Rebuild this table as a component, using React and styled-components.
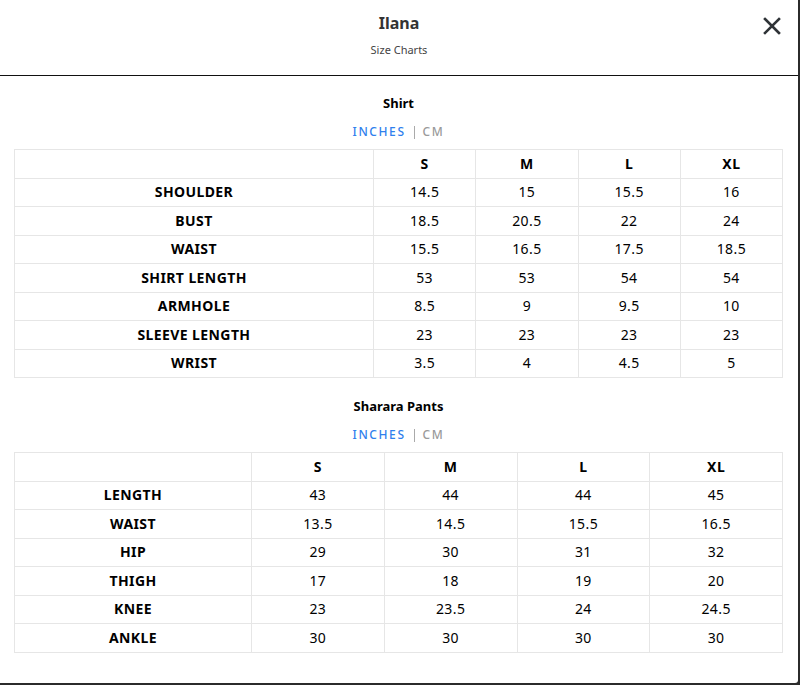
import React from 'react';
import styled, { createGlobalStyle } from 'styled-components';

const GlobalStyle = createGlobalStyle`
    html, body {
        margin: 0;
        padding: 0;
        background: #2b2b2b;
    }
    body {
        font-family: "Noto Sans", "Open Sans", Arial, sans-serif;
        color: #000;
    }
`;

const charts = [
    {
        title: 'Shirt',
        labelWidth: 359,
        sizes: ['S', 'M', 'L', 'XL'],
        rows: [
            ['SHOULDER', '14.5', '15', '15.5', '16'],
            ['BUST', '18.5', '20.5', '22', '24'],
            ['WAIST', '15.5', '16.5', '17.5', '18.5'],
            ['SHIRT LENGTH', '53', '53', '54', '54'],
            ['ARMHOLE', '8.5', '9', '9.5', '10'],
            ['SLEEVE LENGTH', '23', '23', '23', '23'],
            ['WRIST', '3.5', '4', '4.5', '5'],
        ],
    },
    {
        title: 'Sharara Pants',
        labelWidth: 237,
        sizes: ['S', 'M', 'L', 'XL'],
        rows: [
            ['LENGTH', '43', '44', '44', '45'],
            ['WAIST', '13.5', '14.5', '15.5', '16.5'],
            ['HIP', '29', '30', '31', '32'],
            ['THIGH', '17', '18', '19', '20'],
            ['KNEE', '23', '23.5', '24', '24.5'],
            ['ANKLE', '30', '30', '30', '30'],
        ],
    },
];

const Modal = styled.div`
    width: 798px;
    height: 683px;
    background: #fff;
    border-bottom-right-radius: 3px;
    display: flex;
    flex-direction: column;
    overflow: hidden;
`;

const Header = styled.header`
    position: relative;
    display: flex;
    flex-direction: column;
    align-items: center;
    padding: 13px 0 18px;
    border-bottom: 1px solid #111;
`;

const Title = styled.h1`
    margin: 0;
    font-size: 16px;
    line-height: 20px;
    font-weight: 700;
    color: #333;
`;

const Subtitle = styled.div`
    margin-top: 10px;
    font-size: 11px;
    line-height: 14px;
    color: #444;
`;

const CloseButton = styled.button`
    position: absolute;
    top: 16px;
    right: 16px;
    width: 20px;
    height: 20px;
    padding: 0;
    border: 0;
    background: none;
    cursor: pointer;
    display: flex;
    align-items: center;
    justify-content: center;
`;

const Body = styled.div`
    padding: 18px 15px 0 14px;
    display: flex;
    flex-direction: column;
    gap: 19px;
`;

const Section = styled.section`
    display: flex;
    flex-direction: column;
    align-items: center;
`;

const SectionTitle = styled.h2`
    margin: 0;
    font-size: 13px;
    line-height: 18px;
    font-weight: 700;
`;

const UnitToggle = styled.div`
    margin: 12px 0 9px;
    display: flex;
    align-items: center;
    gap: 8px;
    font-size: 12px;
    line-height: 16px;
    font-weight: 500;
    letter-spacing: 1.6px;
`;

const Unit = styled.span`
    color: ${p => (p.$active ? '#2f80ed' : '#9a9a9a')};
`;

const Divider = styled.span`
    width: 1px;
    height: 13px;
    background: #aaa;
`;

const Table = styled.table`
    width: 769px;
    border-collapse: collapse;
    table-layout: fixed;
    font-size: 14px;
`;

const Cell = styled.td`
    height: 28.5px;
    padding: 0 6px;
    box-sizing: border-box;
    border: 1px solid #e6e6e6;
    text-align: center;
    line-height: 18px;
    letter-spacing: 0.4px;
    font-weight: ${p => (p.$bold ? 700 : 400)};
`;

const CloseIcon = () => (
    <svg width="18" height="18" viewBox="0 0 18 18">
        <path d="M2 2 L16 16 M16 2 L2 16" stroke="#2f3337" strokeWidth="2.6" strokeLinecap="square" />
    </svg>
);

const SizeChart = ({ chart }) => (
    <Section>
        <SectionTitle>{chart.title}</SectionTitle>
        <UnitToggle>
            <Unit $active>INCHES</Unit>
            <Divider />
            <Unit>CM</Unit>
        </UnitToggle>
        <Table>
            <colgroup>
                <col style={{ width: chart.labelWidth }} />
                {chart.sizes.map(s => <col key={s} />)}
            </colgroup>
            <tbody>
                <tr>
                    <Cell />
                    {chart.sizes.map(s => <Cell key={s} $bold>{s}</Cell>)}
                </tr>
                {chart.rows.map(([label, ...values]) => (
                    <tr key={label}>
                        <Cell $bold>{label}</Cell>
                        {values.map((v, i) => <Cell key={i}>{v}</Cell>)}
                    </tr>
                ))}
            </tbody>
        </Table>
    </Section>
);

export default function App() {
    return (
        <>
            <GlobalStyle />
            <Modal>
                <Header>
                    <Title>Ilana</Title>
                    <Subtitle>Size Charts</Subtitle>
                    <CloseButton aria-label="Close">
                        <CloseIcon />
                    </CloseButton>
                </Header>
                <Body>
                    {charts.map(c => <SizeChart key={c.title} chart={c} />)}
                </Body>
            </Modal>
        </>
    );
}
